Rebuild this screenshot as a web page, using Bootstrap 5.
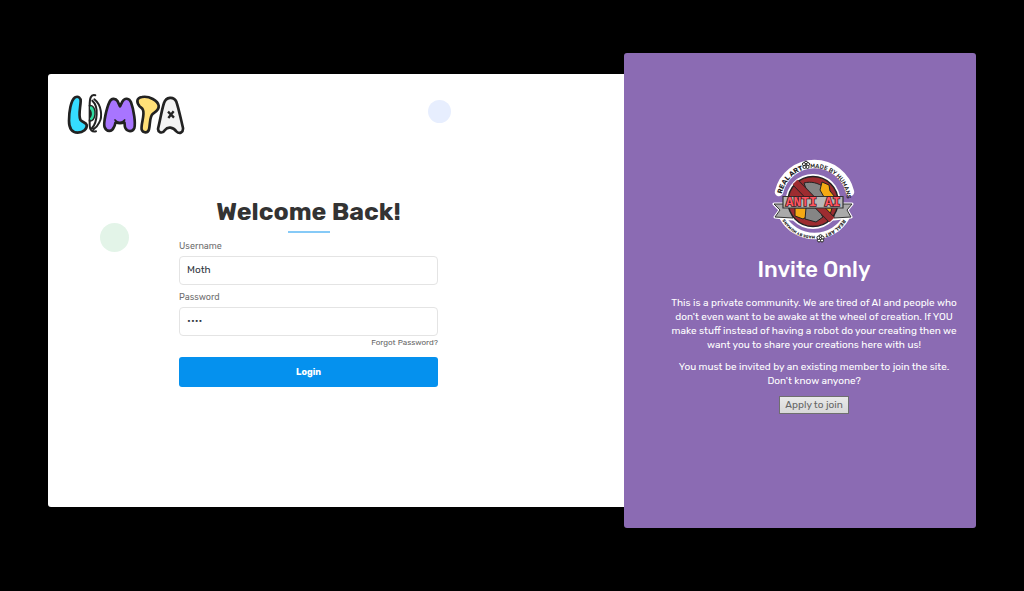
<!DOCTYPE html>
<html lang="en">
<head>
<meta charset="utf-8">
<meta name="viewport" content="width=device-width, initial-scale=1">
<title>LIMTA – Login</title>
<link href="https://cdn.jsdelivr.net/npm/bootstrap@5.3.0/dist/css/bootstrap.min.css" rel="stylesheet">
<style>
body{background:#000;font-family:Rubik,Roboto,"Liberation Sans",sans-serif;font-size:10px;line-height:14px;color:#6c6c6c;padding-bottom:10px}
.login-shell{width:90.6%}
.login-panel{background:#fff;border-radius:3px 0 0 3px;width:62.1%;padding:19px 8% 120px 19px}
.invite-panel{background:#8b6bb3;border-radius:3px;width:37.9%;margin:-21px 0;padding:20px 16px 30px 44px}
.login-form{width:259px;max-width:100%;margin-top:60px}
.login-title{font-size:25px;line-height:34px;font-weight:700;color:#333}
.title-rule{width:42px;height:2px;background:#86caf7;margin:2px auto 6px}
.login-form .form-label{font-size:9px;line-height:14px;margin-bottom:3px;font-weight:400;color:#6f6f6f}
.login-form .form-control{font-size:10px;line-height:17px;padding:5px 7px;border:1px solid #e4e4e4;border-radius:4px;color:#2f3640}
.login-form .form-control + .form-label{margin-top:5px}
.forgot-link{display:block;font-size:8px;line-height:13px;color:#666}
.btn-login{background:#0591ee;color:#fff;font-size:9px;line-height:20px;font-weight:700;border-radius:3px;padding:4px}
.btn-login:hover{background:#047fd2;color:#fff}
.invite-emblem{margin-bottom:12px}
.invite-title{font-size:22px;line-height:28px;font-weight:500}
.btn-apply{background:linear-gradient(#e9e9e9,#d8d8d8);border:1px solid #6f6f6f;color:#666;font-size:10px;line-height:16px;padding:0 5px}
.dot{border-radius:50%}
.dot-blue{width:23px;height:23px;background:#e7eefe;left:66%;top:26px}
.dot-green{width:29px;height:29px;background:#e3f4e8;left:9%;top:149px}
</style>
</head>
<body class="min-vh-100 d-flex align-items-center justify-content-center">
<main class="login-shell d-flex">
  <section class="login-panel position-relative">
    <span class="dot dot-blue position-absolute"></span>
    <span class="dot dot-green position-absolute"></span>
    <a href="#" class="d-block" aria-label="LIMTA home">
      <svg class="d-block" width="118" height="42" viewBox="81 81 354 126" stroke="#222" stroke-width="8" stroke-linejoin="round" stroke-linecap="round">
        <path fill="#35dcff" d="M105 94C115 89 123 96 122 106C121 125 115 148 121 161C127 170 137 168 140 177C142 189 130 200 113 200C94 199 87 184 87 164C87 139 92 103 105 94Z"/>
        <path fill="#31dca0" stroke="#222" stroke-width="4" d="M148 118C162 117 166 132 165 145C163 160 156 166 148 165Z"/>
        <path fill="#222" stroke="none" d="M147 128C158 130 159 155 147 158Z"/>
        <path fill="none" stroke-width="6" d="M166 88C152 84 149 97 149 119M149 163V178C149 192 157 199 168 196M157 104C167 113 171 128 170 145C169 166 165 177 156 186M163 100C186 118 187 153 178 169C174 178 166 186 160 190"/>
        <path fill="#a875ff" d="M194 184C189 173 200 125 209 107C214 97 226 95 233 106L240 121L247 107C254 94 268 96 273 109C282 133 287 173 283 186C278 199 262 198 256 186C252 178 256 168 251 169C246 172 234 172 229 169C224 168 227 176 222 183C216 198 200 199 194 184Z"/>
        <path fill="none" stroke-width="5" d="M225 162C232 172 247 172 254 162"/>
        <path fill="#ffe078" d="M299 121C288 108 290 95 306 93C328 89 354 104 356 119C358 132 347 138 339 143C328 151 331 174 327 190C324 202 309 202 305 191C302 175 315 147 309 132C307 126 303 125 299 121Z"/>
        <path fill="#f2f2f2" d="M372 111C378 92 401 90 409 107C416 126 424 166 429 186C430 199 419 206 409 196C399 183 383 181 375 192C366 206 351 198 355 184C360 165 365 132 372 111Z"/>
        <path fill="none" stroke-width="7" stroke-linecap="butt" d="M384 137L402 155M401 136L385 156"/>
      </svg>
    </a>
    <form class="login-form mx-auto" onsubmit="return false">
      <h1 class="login-title text-center mb-0">Welcome Back!</h1>
      <div class="title-rule"></div>
      <label class="form-label d-block" for="username">Username</label>
      <input class="form-control" id="username" type="text" value="Moth">
      <label class="form-label d-block" for="password">Password</label>
      <input class="form-control" id="password" type="password" value="moth">
      <div class="text-end"><a class="forgot-link text-decoration-none" href="#">Forgot Password?</a></div>
      <button class="btn btn-login w-100 mt-2" type="submit">Login</button>
    </form>
  </section>
  <section class="invite-panel position-relative text-white text-center d-flex flex-column align-items-center justify-content-center">
    <svg class="invite-emblem" width="84" height="86" viewBox="8 7 84 86" role="img" aria-label="Anti AI: real art made by humans" font-family="Rubik,Roboto,sans-serif">
      <defs>
        <path id="ringTop" d="M17 50A33 33 0 0 1 83 50"/>
        <path id="ringBottom" d="M83 59A34 34 0 0 1 17 59"/>
        <g id="flower" fill="#fff" stroke="#222" stroke-width="1"><circle cy="-2.2" r="1.6"/><circle cx="2" cy="-.8" r="1.6"/><circle cx="1.5" cy="1.9" r="1.6"/><circle cx="-1.5" cy="1.9" r="1.6"/><circle cx="-2" cy="-.8" r="1.6"/><circle r="1"/></g>
      </defs>
      <g fill="none" stroke="#fff" stroke-linecap="round">
        <path d="M15 41A36.5 36.5 0 0 1 86 41" stroke-width="8.5"/>
        <path d="M82 67A36.5 36.5 0 0 1 19 67" stroke-width="6.5"/>
      </g>
      <path d="M10 53H20V57H78V53H88L83 59L87 66L70 68H28L11 66L16 59Z" fill="#fff" stroke="#fff" stroke-width="3" stroke-linejoin="round"/>
      <circle cx="49" cy="50.5" r="27.5" fill="#fff"/>
      <path d="M10 53H20L29 58V67L11 66L16 59ZM88 53H78L70 58V67L87 66L83 59Z" fill="#aaa" stroke="#333" stroke-width="1"/>
      <circle cx="49" cy="50.5" r="25" fill="#9d2c30" stroke="#222" stroke-width="1.5"/>
      <g stroke="#222" stroke-width="1">
        <path fill="#858585" d="M40 32C47 30 54 32 60 36V46H45Z"/>
        <path fill="#f5a913" d="M58 31L65 34L66 40L71 46H60L56 39Z"/>
        <path fill="#f5a913" d="M31 57H46L47 63L39 68L31 65Z"/>
        <path fill="#858585" d="M42 57H55L59 66L52 71L41 68Z"/>
        <path fill="#f5a913" d="M57 57H68L65 67L58 65Z"/>
      </g>
      <path d="M32 32L67 68" stroke="#222" stroke-width="8"/>
      <path d="M31 31L68 69" stroke="#9d2c30" stroke-width="6.5"/>
      <path d="M19 45.5H79V57H19Z" fill="#b8b8b8" stroke="#333" stroke-width="1.2"/>
      <text x="49" y="55" text-anchor="middle" font-family="Liberation Mono,monospace" font-weight="700" font-size="13" fill="#ff5561" stroke="#3b1a1d" stroke-width="1.6" paint-order="stroke">ANTI AI</text>
      <g font-weight="700" fill="#1d1d1d">
        <text font-size="7"><textPath href="#ringTop" startOffset="7">REAL ART</textPath></text>
        <text font-size="6" font-weight="500"><textPath href="#ringTop" startOffset="48">MADE BY HUMANS</textPath></text>
        <text font-size="5"><textPath href="#ringBottom" startOffset="10">REAL ART</textPath></text>
        <text font-size="4"><textPath href="#ringBottom" startOffset="44">MADE BY HUMANS</textPath></text>
      </g>
      <use href="#flower" x="42" y="14"/>
      <use href="#flower" x="56.5" y="87.5"/>
    </svg>
    <h2 class="invite-title mb-2 pb-1">Invite Only</h2>
    <p class="mb-2">This is a private community. We are tired of AI and people who don't even want to be awake at the wheel of creation. If YOU make stuff instead of having a robot do your creating then we want you to share your creations here with us!</p>
    <p class="mb-2">You must be invited by an existing member to join the site. Don't know anyone?</p>
    <button class="btn-apply" type="button">Apply to join</button>
  </section>
</main>
<script src="https://cdn.jsdelivr.net/npm/bootstrap@5.3.0/dist/js/bootstrap.bundle.min.js"></script>
</body>
</html>
